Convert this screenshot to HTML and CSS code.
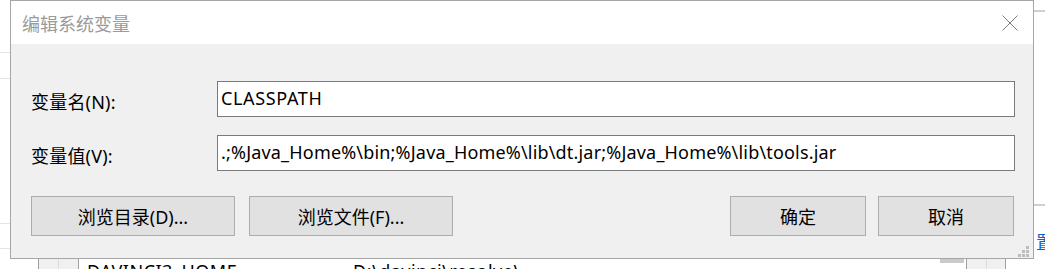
FILE: index.html
```html
<!DOCTYPE html>
<html lang="zh-CN">
<head>
<meta charset="utf-8">
<title>编辑系统变量</title>
<link rel="stylesheet" href="styles.css">
</head>
<body>
<div class="desktop">
  <div class="back-window">
    <div class="hline l1"></div>
    <div class="hline l2"></div>
    <div class="hline l3"></div>
    <div class="hline l4"></div>
    <div class="hline r1"></div>
    <div class="hline r2"></div>
    <div class="vline t1"></div>
    <div class="vline t2"></div>
    <div class="vline t3"></div>
    <div class="list-row">
      <div class="cell-a"></div>
      <div class="cell-b"></div>
      <div class="row-text">
        <span class="name">DAVINCI3_HOME</span>
        <span class="value">D:\davinci\resolve\</span>
      </div>
      <div class="cell-c"></div>
      <div class="cell-d"></div>
    </div>
    <div class="link-glyph">置</div>
  </div>

  <div class="dialog">
    <div class="titlebar">
      <span class="title">编辑系统变量</span>
      <svg class="close" width="16" height="16" viewBox="0 0 16 16">
        <path d="M0.5 0.5 L15.5 15.5 M15.5 0.5 L0.5 15.5" stroke="#7a7a7a" stroke-width="1" fill="none"/>
      </svg>
    </div>
    <div class="body">
      <div class="form">
        <label class="label">变量名(N):</label>
        <div class="input caps">CLASSPATH</div>
        <label class="label">变量值(V):</label>
        <div class="input path">.;%Java_Home%\bin;%Java_Home%\lib\dt.jar;%Java_Home%\lib\tools.jar</div>
      </div>
      <div class="buttons">
        <div class="group left">
          <div class="btn wide">浏览目录(D)...</div>
          <div class="btn wide">浏览文件(F)...</div>
        </div>
        <div class="group right">
          <div class="btn">确定</div>
          <div class="btn">取消</div>
        </div>
      </div>
      <div class="grip">
        <i class="d1"></i><i class="d2"></i><i class="d3"></i>
        <i class="d4"></i><i class="d5"></i><i class="d6"></i>
      </div>
    </div>
  </div>
</div>
</body>
</html>
```

FILE: styles.css
```css
* { box-sizing: border-box; }
html, body {
  margin: 0;
  padding: 0;
  background: #ffffff;
}
body {
  font-family: "Noto Sans", "Noto Sans CJK SC", sans-serif;
  font-size: 18px;
  color: #000;
}
.desktop {
  position: relative;
  width: 1045px;
  height: 269px;
  overflow: hidden;
}

/* window behind the dialog */
.back-window {
  position: absolute;
  inset: 0;
}
.hline {
  position: absolute;
  height: 1px;
  background: #e3e3e3;
}
.hline.l1 { left: 0; width: 10px; top: 52px; }
.hline.l2 { left: 0; width: 10px; top: 78px; }
.hline.l3 { left: 0; width: 10px; top: 223px; }
.hline.l4 { left: 0; width: 10px; top: 248px; }
.hline.r1 { left: 1034px; width: 11px; top: 10px; height: 2px; background: #cfcfcf; }
.hline.r2 { left: 1034px; width: 11px; top: 204px; height: 2px; background: #cfcfcf; }
.vline {
  position: absolute;
  top: 0;
  width: 1px;
  height: 2px;
  background: #c8c8c8;
}
.vline.t1 { left: 38px; }
.vline.t2 { left: 969px; }
.vline.t3 { left: 1007px; }

.list-row {
  position: absolute;
  left: 0;
  top: 259px;
  width: 1045px;
  height: 10px;
}
.cell-a {
  position: absolute;
  left: 38px;
  width: 41px;
  height: 10px;
  background: #f0f0f0;
  border-left: 1px solid #a0a0a0;
  border-right: 1px solid #a0a0a0;
}
.cell-b {
  position: absolute;
  left: 58px;
  width: 1px;
  height: 10px;
  background: #dcdcdc;
}
.cell-c {
  position: absolute;
  left: 940px;
  width: 24px;
  height: 4px;
  background: #cacaca;
}
.cell-d {
  position: absolute;
  left: 966px;
  width: 40px;
  height: 10px;
  background: #f0f0f0;
  border-left: 1px solid #a0a0a0;
  border-right: 1px solid #a0a0a0;
}
.cell-d::after {
  content: "";
  position: absolute;
  left: 19px;
  top: 0;
  width: 1px;
  height: 10px;
  background: #dcdcdc;
}
.row-text {
  position: absolute;
  left: 87px;
  top: 0;
  line-height: 24px;
  white-space: nowrap;
  letter-spacing: 0.5px;
}
.row-text .value {
  position: absolute;
  left: 266px;
}
.link-glyph {
  position: absolute;
  left: 1036px;
  top: 229px;
  color: #0a62d0;
  font-family: "Noto Sans CJK SC", sans-serif;
  font-size: 18px;
  line-height: 24px;
}

/* dialog */
.dialog {
  position: absolute;
  left: 10px;
  top: 0;
  width: 1024px;
  height: 259px;
  border: 1px solid #a6a6a6;
  background: #f0f0f0;
  display: flex;
  flex-direction: column;
}
.titlebar {
  height: 43px;
  background: #ffffff;
  display: flex;
  align-items: center;
  justify-content: space-between;
  padding: 0 15px 0 11px;
  flex: none;
}
.title {
  font-family: "Noto Sans CJK SC", sans-serif;
  font-size: 18px;
  color: #9a9a9a;
  line-height: 24px;
  margin-top: 1px;
}
.close {
  display: block;
  margin-top: 1px;
}
.body {
  position: relative;
  flex: 1;
  padding: 37px 18px 0 20px;
}
.form {
  display: grid;
  grid-template-columns: 186px 1fr;
  row-gap: 18px;
  align-items: center;
}
.label {
  padding-top: 5px;
  line-height: 24px;
  white-space: nowrap;
  letter-spacing: 0.2px;
}
.input {
  height: 36px;
  border: 1px solid #7a7a7a;
  background: #ffffff;
  padding: 2px 3px 0 3px;
  line-height: 28px;
  white-space: nowrap;
  overflow: hidden;
}
.input.caps { letter-spacing: 0.65px; }
.input.path { letter-spacing: 0.18px; }
.buttons {
  margin-top: 25px;
  display: flex;
  justify-content: space-between;
}
.group {
  display: flex;
}
.group.left { gap: 14px; }
.group.right { gap: 12px; margin-right: 1px; }
.btn {
  width: 136px;
  height: 40px;
  border: 1px solid #adadad;
  background: #e1e1e1;
  display: flex;
  align-items: center;
  justify-content: center;
  line-height: 24px;
  padding-top: 1px;
  white-space: nowrap;
}
.btn.wide { width: 204px; }

.grip {
  position: absolute;
  right: 4px;
  bottom: 1px;
  width: 11px;
  height: 11px;
}
.grip i {
  position: absolute;
  width: 3px;
  height: 3px;
  background: #bdbdbd;
}
.grip .d1 { left: 8px; top: 0; }
.grip .d2 { left: 4px; top: 4px; }
.grip .d3 { left: 8px; top: 4px; }
.grip .d4 { left: 0; top: 8px; }
.grip .d5 { left: 4px; top: 8px; }
.grip .d6 { left: 8px; top: 8px; }
```
